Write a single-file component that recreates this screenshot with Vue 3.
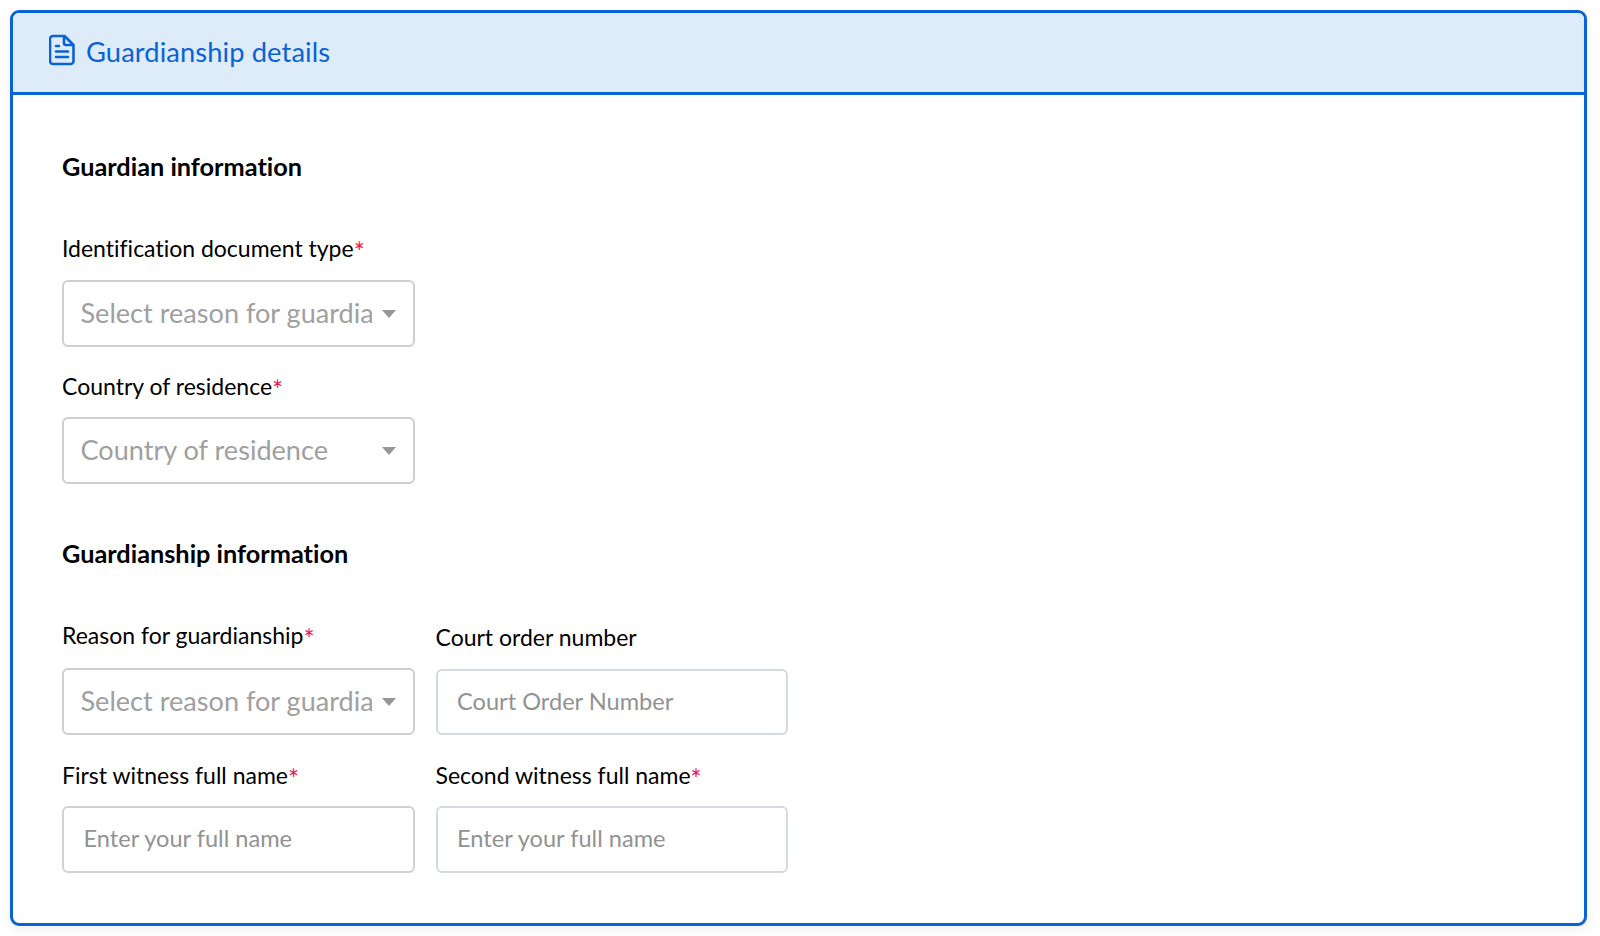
<script setup>
const firstRow = [
  { label: 'Identification document type', text: 'Select reason for guardianship', cls: 'f1' },
  { label: 'Country of residence', text: 'Country of residence', cls: 'f2' }
]
</script>

<template>
  <div class="page">
    <section class="card">
      <header class="head">
        <svg class="doc" viewBox="0 0 26 31" fill="none" stroke="#0a63d6" stroke-width="2.6" stroke-linejoin="round" stroke-linecap="round">
          <path d="M4 1.5h11.5L24.5 10.5V26.5a3 3 0 0 1-3 3H4a3 3 0 0 1-3-3V4.5a3 3 0 0 1 3-3Z" />
          <path d="M15 2v6.5a2 2 0 0 0 2 2h7" />
          <path d="M7 11.5h3M7 17h12M7 22.5h12" />
        </svg>
        <span class="title">Guardianship details</span>
      </header>
      <div class="body">
        <h2 class="h h1">Guardian information</h2>
        <div v-for="f in firstRow" :key="f.label" class="field" :class="f.cls">
          <label class="lab">{{ f.label }}<i>*</i></label>
          <div class="select"><span>{{ f.text }}</span><b class="caret"></b></div>
        </div>
        <h2 class="h h2b">Guardianship information</h2>
        <div class="grid">
          <div class="field">
            <label class="lab l3">Reason for guardianship<i>*</i></label>
            <div class="select"><span>Select reason for guardianship</span><b class="caret"></b></div>
          </div>
          <div class="field">
            <label class="lab l4">Court order number</label>
            <input class="inp" placeholder="Court Order Number" />
          </div>
          <div class="field">
            <label class="lab">First witness full name<i>*</i></label>
            <input class="inp grey" placeholder="Enter your full name" />
          </div>
          <div class="field">
            <label class="lab">Second witness full name<i>*</i></label>
            <input class="inp" placeholder="Enter your full name" />
          </div>
        </div>
      </div>
    </section>
  </div>
</template>

<style>
html, body { margin: 0; background: #fff; }
</style>

<style scoped>
.page {
  box-sizing: border-box;
  height: 936px;
  padding: 10px 13px 0 10px;
  font-family: "Lato", "Open Sans", sans-serif;
  font-variant-ligatures: none;
  overflow: hidden;
}
.card {
  box-sizing: border-box;
  height: 916px;
  border: 3px solid #0a63d6;
  border-radius: 9px;
  box-shadow: 0 4px 12px rgba(0, 0, 0, .06);
  overflow: hidden;
  background: #fff;
}
.head {
  box-sizing: border-box;
  height: 82px;
  background: #deebf8;
  border-bottom: 3px solid #0a63d6;
  display: flex;
  align-items: center;
  padding-left: 36px;
  gap: 11px;
}
.doc { width: 26px; height: 32px; margin-top: -6px; }
.title { color: #0a63d6; font-size: 27.3px; letter-spacing: .1px; margin-top: -3px; }
.body { padding: 56px 0 0 49px; }
.h { margin: 0; font-size: 25.3px; line-height: 30px; font-weight: 700; color: #000; }
.h1 { margin-bottom: 52px; }
.h2b { margin-top: 54px; margin-bottom: 52px; }
.field { width: 353px; display: flex; flex-direction: column; }
.lab { font-size: 23px; line-height: 30px; color: #000; margin-bottom: 16px; display: block; }
.lab i { color: #f0124f; font-style: normal; font-size: 26px; line-height: 0; vertical-align: -5px; }
.f1 .lab { margin-bottom: 17px; }
.f2 { margin-top: 24px; }
.f2 .lab { margin-bottom: 16px; }
.select, .inp {
  box-sizing: border-box;
  width: 100%;
  height: 67px;
  border-radius: 6px;
  background: #fff;
}
.select {
  border: 2px solid #cfcfcf;
  display: flex;
  align-items: center;
  padding: 0 17px 2px 16.5px;
  color: #a0a0a0;
  font-size: 27.1px;
}
.select span { flex: 1; min-width: 0; white-space: nowrap; overflow: hidden; margin-right: 10px; }
.caret {
  width: 0; height: 0;
  margin-top: 2px;
  border-left: 7.5px solid transparent;
  border-right: 7.5px solid transparent;
  border-top: 8px solid #979797;
}
.inp {
  border: 2px solid #d5dae1;
  padding: 0 20px 3px 19.5px;
  font: inherit;
  font-size: 23.6px;
  outline: none;
  color: #333;
}
.inp.grey { border-color: #d2d2d2; }
.inp::placeholder { color: #929292; opacity: 1; }
.grid { display: grid; grid-template-columns: 353px 352.5px; column-gap: 20.5px; row-gap: 25px; width: max-content; }
.grid .field { width: auto; }
.l3 { margin-bottom: 18px; }
.l4 { margin-top: 2px; margin-bottom: 17px; }
.l4 + .inp { height: 66px; }
</style>
